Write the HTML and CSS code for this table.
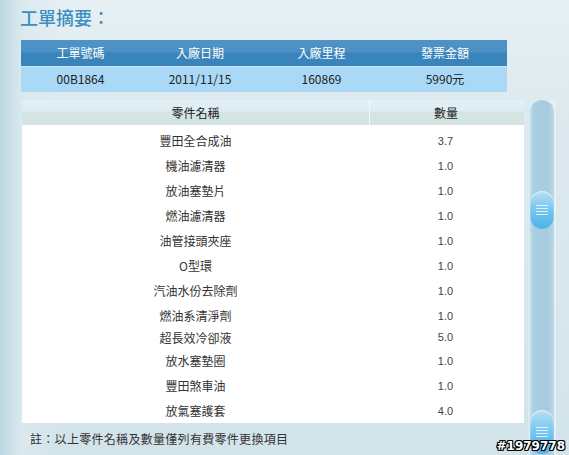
FILE: index.html
```html
<!DOCTYPE html>
<html lang="zh-Hant">
<head>
<meta charset="utf-8">
<link rel="stylesheet" href="styles.css">
</head>
<body>
<div class="page">
  <h1 class="title">工單摘要：</h1>
  <div class="summary">
    <div class="sum-head">
      <span>工單號碼</span><span>入廠日期</span><span>入廠里程</span><span>發票金額</span>
    </div>
    <div class="sum-row">
      <span>00B1864</span><span>2011/11/15</span><span>160869</span><span>5990元</span>
    </div>
  </div>
  <div class="parts-wrap">
    <div class="parts">
      <div class="parts-head">
        <span class="c-name">零件名稱</span><span class="c-qty">數量</span>
      </div>
      <div class="rows">
        <div class="row"><span class="c-name">豐田全合成油</span><span class="c-qty">3.7</span></div>
        <div class="row"><span class="c-name">機油濾清器</span><span class="c-qty">1.0</span></div>
        <div class="row"><span class="c-name">放油塞墊片</span><span class="c-qty">1.0</span></div>
        <div class="row"><span class="c-name">燃油濾清器</span><span class="c-qty">1.0</span></div>
        <div class="row"><span class="c-name">油管接頭夾座</span><span class="c-qty">1.0</span></div>
        <div class="row"><span class="c-name">O型環</span><span class="c-qty">1.0</span></div>
        <div class="row"><span class="c-name">汽油水份去除劑</span><span class="c-qty">1.0</span></div>
        <div class="row"><span class="c-name">燃油系清淨劑</span><span class="c-qty">1.0</span></div>
        <div class="row short"><span class="c-name">超長效冷卻液</span><span class="c-qty">5.0</span></div>
        <div class="row"><span class="c-name">放水塞墊圈</span><span class="c-qty">1.0</span></div>
        <div class="row"><span class="c-name">豐田煞車油</span><span class="c-qty">1.0</span></div>
        <div class="row"><span class="c-name">放氣塞護套</span><span class="c-qty">4.0</span></div>
      </div>
    </div>
    <div class="scrollbar">
      <div class="track">
        <div class="thumb thumb-a"><i></i><i></i><i></i><i></i></div>
        <div class="thumb thumb-b"><i></i><i></i><i></i><i></i></div>
      </div>
    </div>
  </div>
  <p class="note">註：以上零件名稱及數量僅列有費零件更換項目</p>
</div>
<div class="watermark">#1979778</div>
</body>
</html>
```
FILE: styles.css
```css
html, body {
  margin: 0;
  padding: 0;
}
body {
  width: 569px;
  height: 455px;
  overflow: hidden;
  position: relative;
  font-family: "Noto Sans CJK TC", "Liberation Sans", sans-serif;
  color: #333;
  background:
    linear-gradient(90deg, #bcd7e2 0px, #cfe3eb 14px, #dbe9ef 22px, rgba(226,238,243,0) 60px),
    linear-gradient(180deg, #e6f0f4 0px, #dde9ee 120px, #d9e7ed 300px, #d2e3ea 455px);
}
.page {
  padding: 4px 0 0 20px;
}
.title {
  margin: 0;
  height: 36px;
  font-size: 18px;
  line-height: 26px;
  font-weight: 500;
  color: #3a8fc0;
}
.summary {
  width: 486px;
  margin-left: 1px;
}
.sum-head, .sum-row {
  display: grid;
  grid-template-columns: 119px 120px 123px 124px;
  text-align: center;
  font-size: 12px;
}
.sum-head {
  height: 26px;
  line-height: 26px;
  color: #fff;
  background: linear-gradient(180deg, #4f93c6 0px, #4b90c4 12px, #3a84bc 13px, #3a84bc 26px);
  border-bottom: 1px solid #cfe8f8;
}
.sum-row {
  height: 25px;
  line-height: 24px;
  color: #222;
  background: #a9d9f6;
}
.parts-wrap {
  display: flex;
  align-items: flex-start;
  height: 323px;
  margin-top: 8px;
  margin-left: 2px;
}
.parts {
  width: 502px;
  height: 323px;
  background: #fff;
  font-size: 12px;
}
.parts-head {
  display: flex;
  height: 25px;
  line-height: 26px;
  color: #222;
  background: linear-gradient(180deg, #e1eff6 0px, #deedf4 11px, #d4e4e2 12px, #d4e4e2 25px);
}
.parts-head .c-name {
  border-right: 1px solid #f2f8fa;
}
.rows {
  padding-top: 3px;
}
.c-name {
  width: 347px;
  text-align: center;
  flex: none;
}
.c-qty {
  flex: 1;
  text-align: center;
  padding-right: 2px;
}
.row {
  display: flex;
  height: 25px;
  line-height: 26px;
  color: #333;
}
.row.short {
  height: 20px;
  line-height: 19px;
}
.row .c-qty {
  font-family: "Liberation Sans", sans-serif;
  font-size: 11px;
  color: #444;
}
.scrollbar {
  flex: none;
  margin-left: 4px;
  width: 28px;
  height: 360px;
  background: linear-gradient(90deg, #dbeaf1, #e6f1f5);
  display: flex;
  justify-content: center;
}
.track {
  position: relative;
  width: 24px;
  height: 100%;
  border-radius: 12px 12px 0 0;
  background: linear-gradient(90deg, #c4dde9 0px, #a9cde1 4px, #a7cce0 18px, #bcd8e6 24px);
}
.thumb {
  position: absolute;
  left: 0;
  width: 24px;
  height: 38px;
  border-radius: 12px;
  background: linear-gradient(180deg, #b9def2 0%, #8fd0f2 30%, #6bc1ee 60%, #4fb2e6 100%);
  box-shadow: inset 0 1px 2px rgba(255,255,255,0.7);
  display: flex;
  flex-direction: column;
  align-items: center;
  justify-content: center;
  gap: 2px;
}
.thumb i {
  display: block;
  width: 12px;
  height: 1px;
  background: rgba(255,255,255,0.75);
}
.thumb-a {
  top: 91px;
}
.thumb-b {
  top: 310px;
  height: 44px;
}
.note {
  margin: 7px 0 0 10px;
  font-size: 12px;
  line-height: 18px;
  color: #333;
  letter-spacing: 0.3px;
}
.watermark {
  position: absolute;
  right: 4px;
  bottom: 2px;
  font-family: "DejaVu Sans", sans-serif;
  font-weight: bold;
  font-size: 12px;
  color: #fff;
  text-shadow: -1px 0 #000, 1px 0 #000, 0 -1px #000, 0 1px #000, -1px -1px #000, 1px 1px #000, 1px -1px #000, -1px 1px #000;
}
```
